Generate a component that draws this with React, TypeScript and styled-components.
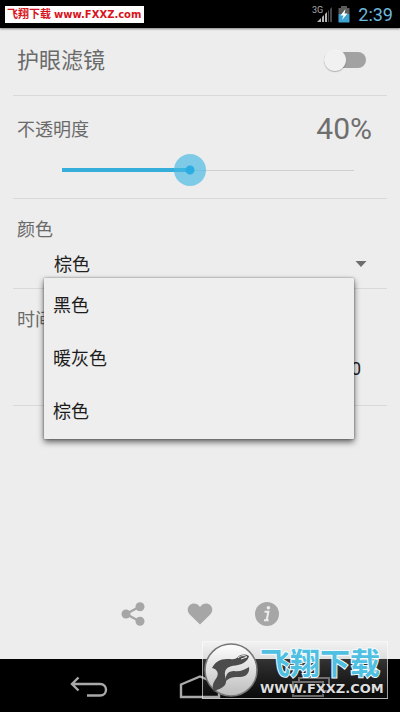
import React, { useState } from "react";
import styled, { createGlobalStyle } from "styled-components";

const GlobalStyle = createGlobalStyle`
  * { box-sizing: border-box; }
  body {
    margin: 0;
    background: #ededed;
    font-family: Roboto, "Noto Sans CJK SC", sans-serif;
  }
  button, input, select { font: inherit; margin: 0; }
`;

const Screen = styled.div`
  position: relative;
  display: flex;
  flex-direction: column;
  min-height: 100vh;
  background: #ededed;
`;

const StatusBar = styled.header`
  display: flex;
  align-items: center;
  gap: 6px;
  height: 28px;
  padding: 0 7px 0 5px;
  background: #000;
  box-shadow: 0 1px 2px rgba(0, 0, 0, 0.45);
`;

const Banner = styled.a`
  display: flex;
  align-items: center;
  gap: 3px;
  height: 17px;
  margin-right: auto;
  padding: 0 3px 0 2px;
  background: #fff;
  color: #d8141c;
  font: 700 10px/17px "DejaVu Sans", "Noto Sans CJK SC", sans-serif;
  text-decoration: none;
  white-space: nowrap;
`;

const BannerName = styled.span`
  font-size: 11px;
`;

const Signal = styled.div`
  display: flex;
  align-items: flex-start;
`;

const Clock = styled.time`
  margin-left: 2px;
  padding-top: 2px;
  color: #6cb9de;
  font-size: 18px;
  line-height: 26px;
`;

const Settings = styled.main`
  flex: 1;
  display: flex;
  flex-direction: column;
  padding: 0 13px;
`;

const Section = styled.section<{ $height: number }>`
  position: relative;
  min-height: ${(p) => p.$height}px;
  border-bottom: 1px solid #d9d9d9;
`;

const Row = styled.div<{ $height: number; $top?: number }>`
  display: flex;
  align-items: center;
  justify-content: space-between;
  height: ${(p) => p.$height}px;
  margin-top: ${(p) => p.$top ?? 0}px;
  padding: 0 15px 0 4px;
`;

const Title = styled.label`
  padding-top: 2px;
  color: #6a6a6a;
  font-size: 22px;
  line-height: 32px;
`;

const Label = styled.label`
  padding-top: 2px;
  color: #6a6a6a;
  font-size: 18px;
  line-height: 28px;
`;

const Percent = styled.output`
  color: #6e6e6e;
  font-size: 30px;
  line-height: 36px;
`;

const Switch = styled.input`
  appearance: none;
  position: relative;
  width: 42px;
  height: 22px;
  margin-right: 6px;
  cursor: pointer;

  &::before {
    content: "";
    position: absolute;
    inset: 3px 0;
    border-radius: 8px;
    background: #a2a2a2;
  }
  &::after {
    content: "";
    position: absolute;
    top: 0;
    left: 0;
    width: 22px;
    height: 22px;
    border-radius: 50%;
    background: #f1f1f1;
    box-shadow: 0 1px 1px rgba(0, 0, 0, 0.25);
  }
  &:checked::before { background: #7cc8e8; }
  &:checked::after { left: 20px; }
`;

const SliderBox = styled.div`
  display: grid;
  padding: 7px 17px 0 33px;
`;

const Slider = styled.input`
  appearance: none;
  display: block;
  width: auto;
  height: 32px;
  background:
    linear-gradient(#35aedc, #35aedc) 16px center / calc((100% - 32px) * var(--filled)) 4px no-repeat,
    linear-gradient(#cfcfcf, #cfcfcf) center / calc(100% - 32px) 1px no-repeat;

  &::-webkit-slider-thumb {
    appearance: none;
    width: 32px;
    height: 32px;
    border-radius: 50%;
    background: radial-gradient(circle, #2bade2 0 4px, rgba(68, 184, 228, 0.66) 5px);
  }
`;

const Spinner = styled.div`
  display: flex;
  align-items: center;
  height: 38px;
  padding: 0 20px 0 41px;
`;

const ColorSelect = styled.select`
  appearance: none;
  flex: 1;
  height: 32px;
  padding: 0;
  border: 0;
  background: transparent;
  color: #222;
  font-size: 18px;
`;

const Popup = styled.ul`
  position: absolute;
  z-index: 1;
  top: 79px;
  left: 31px;
  right: 33px;
  margin: 0;
  padding: 0 0 2px;
  list-style: none;
  background: #eee;
  border-radius: 1px;
  box-shadow:
    0 0 2px rgba(0, 0, 0, 0.45),
    0 3px 6px rgba(0, 0, 0, 0.6);
`;

const Option = styled.button`
  display: block;
  width: 100%;
  height: 53px;
  padding: 0 9px 2px;
  border: 0;
  background: transparent;
  color: #1c1c1c;
  font-size: 18px;
  text-align: left;
`;

const TimeValue = styled.output`
  display: block;
  padding: 20px 26px 0;
  color: #222;
  font-size: 18px;
  line-height: 28px;
  text-align: right;
`;

const Actions = styled.footer`
  display: flex;
  justify-content: center;
  gap: 35px;
  margin-top: auto;
  padding-bottom: 29px;
`;

const IconButton = styled.button`
  display: grid;
  place-items: center;
  width: 32px;
  height: 32px;
  padding: 0;
  border: 0;
  background: transparent;
  color: #a6a6a6;
`;

const NavBar = styled.nav`
  display: grid;
  grid-template-columns: repeat(3, 1fr);
  height: 53px;
  padding: 0 33px;
  background: #000;
`;

const NavButton = styled.button`
  display: grid;
  place-items: center;
  padding: 3px 0 0;
  border: 0;
  background: transparent;
  color: #a9a9a9;
`;

const Watermark = styled.aside`
  position: absolute;
  right: 12px;
  bottom: 13px;
  display: flex;
  align-items: center;
  gap: 2px;
  width: 186px;
  height: 58px;
  padding-left: 1px;
  border: 1px solid rgba(255, 255, 255, 0.6);
  background: linear-gradient(rgba(255, 255, 255, 0.3), rgba(160, 160, 160, 0.28) 40%, rgba(160, 160, 160, 0.06));
  pointer-events: none;
`;

const Brand = styled.div`
  display: flex;
  flex-direction: column;
  padding-top: 6px;
  font-family: "DejaVu Sans", "Noto Sans CJK SC", sans-serif;
  font-weight: 700;
  white-space: nowrap;
`;

const BrandName = styled.span`
  color: #4fbfe2;
  font-size: 30px;
  line-height: 32px;
  -webkit-text-stroke: 2px #f4fbfe;
  paint-order: stroke fill;
`;

const BrandSite = styled.span`
  color: #dedede;
  font-size: 13px;
  line-height: 18px;
  text-shadow: 0 1px 1px #000;
`;

const colors = ["黑色", "暖灰色", "棕色"];
const maxOpacity = 91;

export default function App() {
  const [enabled, setEnabled] = useState(false);
  const [opacity, setOpacity] = useState(40);
  const [color, setColor] = useState("棕色");
  const filled = { "--filled": opacity / maxOpacity } as React.CSSProperties;

  return (
    <Screen>
      <GlobalStyle />
      <StatusBar>
        <Banner href="#">
          <BannerName>飞翔下载</BannerName>www.FXXZ.com
        </Banner>
        <Signal>
          <svg width="21" height="18" viewBox="0 0 21 18" role="img" aria-label="3G">
            <text x="1" y="8" fontSize="9" fill="#aaa" fontFamily="Roboto">3G</text>
            <path d="M6 17L10 13V17ZM11 12L13 10V17H11ZM14 9L16 7V17H14Z" fill="#b4b4b4" />
            <path d="M17 6L18 5V17H17ZM19 4L21 2V17H19Z" fill="#484848" />
          </svg>
        </Signal>
        <svg width="12" height="18" viewBox="0 0 12 18" role="img" aria-label="充电中">
          <path d="M3 1H9V3H11.5V9H.5V3H3Z" fill="#5a5a5a" />
          <path d="M.5 9H11.5V17.5H.5Z" fill="#3ea3d0" />
          <path d="M7.5 4L2.5 10.5H5.5L4 15L9.5 8.5H6.5Z" fill="#fff" />
        </svg>
        <Clock>2:39</Clock>
      </StatusBar>

      <Settings>
        <Section $height={68}>
          <Row $height={64}>
            <Title htmlFor="filter">护眼滤镜</Title>
            <Switch
              id="filter"
              type="checkbox"
              role="switch"
              checked={enabled}
              onChange={(e) => setEnabled(e.target.checked)}
            />
          </Row>
        </Section>

        <Section $height={103}>
          <Row $height={36} $top={15}>
            <Label htmlFor="opacity">不透明度</Label>
            <Percent htmlFor="opacity">{opacity}%</Percent>
          </Row>
          <SliderBox>
            <Slider
              id="opacity"
              type="range"
              min={0}
              max={maxOpacity}
              value={opacity}
              style={filled}
              onChange={(e) => setOpacity(Number(e.target.value))}
            />
          </SliderBox>
        </Section>

        <Section $height={90}>
          <Row $height={32} $top={14}>
            <Label htmlFor="color">颜色</Label>
          </Row>
          <Spinner>
            <ColorSelect id="color" value={color} onChange={(e) => setColor(e.target.value)}>
              {colors.map((c) => (
                <option key={c}>{c}</option>
              ))}
            </ColorSelect>
            <svg width="12" height="6" viewBox="0 0 12 6" aria-hidden="true">
              <path d="M.5 0H11.5L6 6Z" fill="#6d6d6d" />
            </svg>
          </Spinner>
          <Popup aria-label="颜色">
            {colors.map((c) => (
              <li key={c}>
                <Option type="button" onClick={() => setColor(c)}>{c}</Option>
              </li>
            ))}
          </Popup>
        </Section>

        <Section $height={117}>
          <Row $height={32} $top={14}>
            <Label htmlFor="time">时间</Label>
          </Row>
          <TimeValue id="time">0</TimeValue>
        </Section>

        <Actions>
          <IconButton aria-label="分享">
            <svg width="24" height="24" viewBox="0 0 24 24" fill="currentColor">
              <path d="M5 12L19 4.5M5 12L19 19.5" stroke="currentColor" strokeWidth="2.4" />
              <circle cx="5" cy="12" r="4.5" />
              <circle cx="19" cy="4.8" r="4.5" />
              <circle cx="19" cy="19.2" r="4.5" />
            </svg>
          </IconButton>
          <IconButton aria-label="喜欢">
            <svg width="26" height="24" viewBox="0 0 26 24" fill="currentColor">
              <path d="M13 22.5L3 12.8C-.2 9.4 .3 5.3 2.6 3.2C5.6.5 10.4 1 13 5C15.6 1 20.4.5 23.4 3.2C25.7 5.3 26.2 9.4 23 12.8Z" />
            </svg>
          </IconButton>
          <IconButton aria-label="关于">
            <svg width="24" height="24" viewBox="0 0 24 24">
              <circle cx="12" cy="12" r="12" fill="currentColor" />
              <circle cx="13.4" cy="5.8" r="1.8" fill="#ededed" />
              <path d="M9.5 9.8H13.4L11.6 18.2H13.6M9 18.2H12" fill="none" stroke="#ededed" strokeWidth="2" />
            </svg>
          </IconButton>
        </Actions>
      </Settings>

      <NavBar>
        <NavButton aria-label="返回">
          <svg width="38" height="22" viewBox="0 0 38 22" fill="none" stroke="currentColor" strokeWidth="2.4">
            <path d="M8.5 1.5L2 8L8.5 14.5M2 8H30C38 8 38 19.5 30 19.5H17" />
          </svg>
        </NavButton>
        <NavButton aria-label="主页">
          <svg width="42" height="24" viewBox="0 0 42 24" fill="none" stroke="currentColor" strokeWidth="2.4">
            <path d="M2 9.5L21 1.5L40 9.5V22H2Z" />
          </svg>
        </NavButton>
        <NavButton aria-label="最近任务">
          <svg width="38" height="20" viewBox="0 0 38 20" fill="none" stroke="#666" strokeWidth="2">
            <path d="M7 5V1H37V14H32M1 5H31V19H1Z" />
          </svg>
        </NavButton>
      </NavBar>

      <Watermark>
        <svg width="54" height="54" viewBox="0 0 54 54" aria-hidden="true">
          <defs>
            <linearGradient id="disc" x1="0" y1="0" x2="0" y2="1">
              <stop offset="0" stopColor="#fff" />
              <stop offset="1" stopColor="#bcbcbc" />
            </linearGradient>
          </defs>
          <circle cx="27" cy="27" r="26" fill="url(#disc)" stroke="#777" strokeWidth="1.5" />
          <g fill="#4c4c4c">
            <path d="M10 49C7 42 10 39 13 34C15 30 13 26 8 25C11 19 16 16 23 16C29 16 31 17 34 14C37 11 41 11 45 13C44 18 39 21 34 22C27 23 22 24 21 29C20 34 24 37 21 42C18 46 13 46 10 49Z" />
            <path d="M22 38C21 32 24 28 30 28C36 29 40 27 45 24C46 30 42 34 36 34C30 34 26 34 22 38Z" />
          </g>
          <path d="M34 15C37 12 41 12 43 14L37 16" fill="none" stroke="#e8e8e8" strokeWidth="1" />
        </svg>
        <Brand>
          <BrandName>飞翔下载</BrandName>
          <BrandSite>WWW.FXXZ.COM</BrandSite>
        </Brand>
      </Watermark>
    </Screen>
  );
}
